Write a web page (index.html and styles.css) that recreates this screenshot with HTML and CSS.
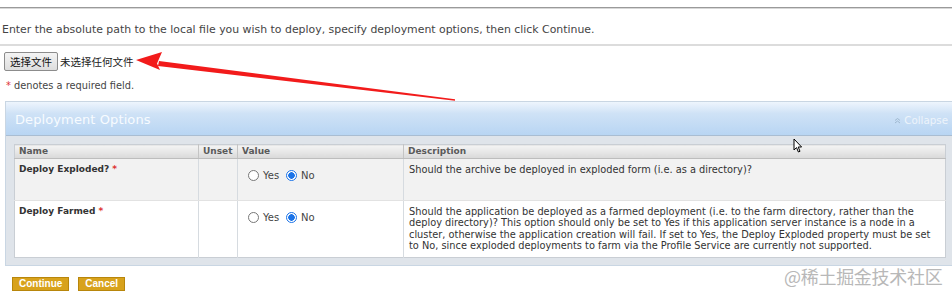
FILE: index.html
```html
<!DOCTYPE html>
<html>
<head>
<meta charset="utf-8">
<link rel="stylesheet" href="styles.css">
</head>
<body>
<div class="page">
  <div class="topline"></div>
  <p class="intro">Enter the absolute path to the local file you wish to deploy, specify deployment options, then click Continue.</p>
  <div class="fileRow">
    <span class="fileBtn">选择文件</span>
    <span class="fileName">未选择任何文件</span>
  </div>
  <p class="req"><span class="star">*</span> denotes a required field.</p>

  <div class="panel">
    <div class="panelHead">
      <span class="panelTitle">Deployment Options</span>
      <span class="collapse">
        <svg width="7" height="7" viewBox="0 0 7 7"><path d="M1 3.5 L3.5 1.5 L6 3.5 M1 6 L3.5 4 L6 6" fill="none" stroke="#9fb8cf" stroke-width="1"/></svg>
        Collapse
      </span>
    </div>
    <div class="panelBody">
      <table class="opts">
        <colgroup>
          <col class="cName"><col class="cUnset"><col class="cValue"><col>
        </colgroup>
        <thead>
          <tr><th>Name</th><th>Unset</th><th>Value</th><th>Description</th></tr>
        </thead>
        <tbody>
          <tr class="odd">
            <td class="name">Deploy Exploded? <span class="star">*</span></td>
            <td></td>
            <td class="val">
              <span class="radio"></span><span class="lbl">Yes</span>
              <span class="radio on"></span><span class="lbl">No</span>
            </td>
            <td class="desc">Should the archive be deployed in exploded form (i.e. as a directory)?</td>
          </tr>
          <tr class="even">
            <td class="name">Deploy Farmed <span class="star">*</span></td>
            <td></td>
            <td class="val">
              <span class="radio"></span><span class="lbl">Yes</span>
              <span class="radio on"></span><span class="lbl">No</span>
            </td>
            <td class="desc">Should the application be deployed as a farmed deployment (i.e. to the farm directory, rather than the deploy directory)? This option should only be set to Yes if this application server instance is a node in a cluster, otherwise the application creation will fail. If set to Yes, the Deploy Exploded property must be set to No, since exploded deployments to farm via the Profile Service are currently not supported.</td>
          </tr>
        </tbody>
      </table>
    </div>
  </div>

  <div class="actions">
    <span class="btn">Continue</span>
    <span class="btn">Cancel</span>
  </div>

  <svg class="arrow" width="952" height="291" viewBox="0 0 952 291">
    <polygon points="455,99.2 455,100.8 158,66 159,61" fill="#f21b1b"/>
    <polygon points="136,60 162,52 157,63.5 160,70" fill="#f21b1b"/>
  </svg>
  <svg class="cursor" width="12" height="16" viewBox="0 0 12 16">
    <path d="M1 1 L1 12 L3.5 9.6 L5.4 14 L7 13.3 L5.2 9 L8.6 9 Z" fill="#fff" stroke="#000" stroke-width="1" stroke-linejoin="round"/>
  </svg>
  <div class="watermark">@稀土掘金技术社区</div>
</div>
</body>
</html>
```

FILE: styles.css
```css
html, body {
  margin: 0;
  padding: 0;
  background: #fff;
}
.page {
  position: relative;
  width: 952px;
  height: 291px;
  overflow: hidden;
  font-family: "DejaVu Sans", Verdana, sans-serif;
  color: #333;
}
.topline {
  margin-top: 7px;
  height: 1px;
  background: #9a9a9a;
  border-bottom: 1px solid #d8d8d8;
}
.intro {
  margin: 0;
  padding: 14px 0 0 2px;
  height: 21px;
  font-size: 10.9px;
  line-height: 14px;
  color: #444;
  border-bottom: 2px solid #dcdcdc;
}
.fileRow {
  display: flex;
  align-items: center;
  gap: 2px;
  margin-top: 6px;
  padding-left: 4px;
  height: 19px;
}
.fileBtn {
  display: flex;
  align-items: center;
  justify-content: center;
  width: 52px;
  height: 17px;
  border: 1px solid #8c8c8c;
  border-radius: 2px;
  background: linear-gradient(#f4f4f4, #dedede);
  font-family: "Noto Sans CJK SC", sans-serif;
  font-size: 10.5px;
  color: #111;
}
.fileName {
  font-family: "Noto Sans CJK SC", sans-serif;
  font-size: 10.5px;
  color: #222;
}
.req {
  margin: 0;
  padding: 9px 0 0 6px;
  height: 21px;
  font-size: 9.8px;
  line-height: 12px;
  color: #444;
}
.star {
  color: #d33;
}
.panel {
  margin: 0 0 0 5px;
  border: 1px solid #c9d6e3;
  border-right: none;
  background: #dfe4ea;
}
.panelHead {
  display: flex;
  align-items: center;
  justify-content: space-between;
  height: 33px;
  background: linear-gradient(#eef5fd 0%, #cfe2f6 35%, #b8d5f3 100%);
  border-bottom: 1px solid #a9bdd2;
  padding: 0 4px 0 9px;
}
.panelTitle {
  color: #f7fbff;
  font-size: 13px;
  letter-spacing: 0.1px;
  padding-top: 2px;
}
.collapse {
  display: flex;
  align-items: center;
  gap: 3px;
  color: #edf4fb;
  font-size: 10.3px;
  padding-top: 3px;
}
.panelBody {
  padding: 8px 6px 7px 8px;
}
.opts {
  width: 932px;
  border-collapse: collapse;
  table-layout: fixed;
  font-size: 9px;
  background: #fff;
  border: 1px solid #c9ced4;
}
.cName { width: 184px; }
.cUnset { width: 39px; }
.cValue { width: 166px; }
.opts th {
  height: 13px;
  padding: 0 4px;
  text-align: left;
  font-weight: bold;
  color: #5a5a5a;
  background: linear-gradient(#f4f4f4, #d9d9d9);
  border-left: 1px solid #c4c4c4;
  border-bottom: 1px solid #bdbdbd;
  font-size: 9px;
  line-height: 13px;
}
.opts th:first-child { border-left: none; }
.opts td {
  vertical-align: top;
  border-left: 1px solid #d6dbe0;
  padding: 5px 4px 0 4px;
  line-height: 11.4px;
  color: #333;
}
.opts td:first-child { border-left: none; }
.odd td {
  background: #f2f2f2;
  height: 36px;
  border-bottom: 1px solid #e2e2e2;
}
.even td {
  background: #fff;
  height: 51px;
}
.name {
  font-weight: bold;
  color: #333;
}
.val {
  padding-left: 10px !important;
}
.val .radio {
  display: inline-block;
  width: 9px;
  height: 9px;
  border: 1px solid #777;
  border-radius: 50%;
  background: #fff;
  vertical-align: -2px;
  margin-top: 6px;
  margin-right: 4px;
}
.val .radio.on {
  border-color: #1a73e8;
  background: radial-gradient(circle, #1a73e8 0 3px, #fff 3.5px);
}
.val .lbl {
  font-size: 10px;
  color: #444;
  margin-right: 4px;
}
.desc {
  color: #333;
  font-size: 9.8px;
  padding-left: 5px !important;
}
.actions {
  display: flex;
  gap: 9px;
  margin: 11px 0 0 12px;
}
.btn {
  display: flex;
  align-items: center;
  justify-content: center;
  height: 12px;
  padding: 0 6px;
  background: #d8a21c;
  border: 1px solid #b8860b;
  color: #fff;
  font-family: "Liberation Sans", Arial, sans-serif;
  font-weight: bold;
  font-size: 10px;
  line-height: 12px;
}
.arrow {
  position: absolute;
  left: 0;
  top: 0;
  pointer-events: none;
}
.cursor {
  position: absolute;
  left: 793px;
  top: 138px;
}
.watermark {
  position: absolute;
  left: 784px;
  top: 263px;
  font-family: "Noto Sans CJK SC", sans-serif;
  font-size: 18px;
  color: #b8b8b8;
  letter-spacing: -0.3px;
}
```
